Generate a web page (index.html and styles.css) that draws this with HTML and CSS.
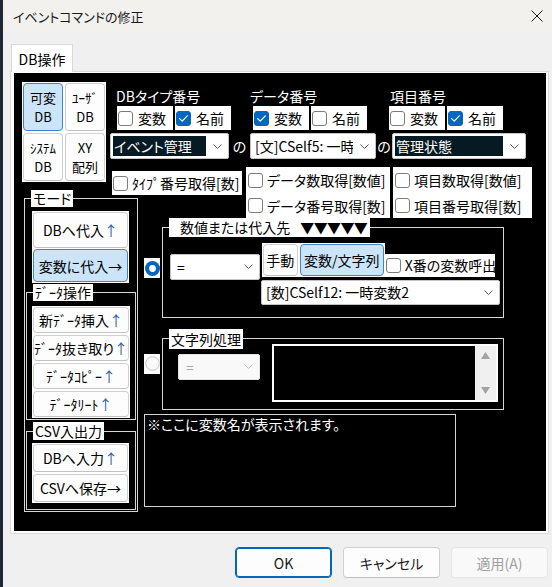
FILE: index.html
```html
<!DOCTYPE html>
<html lang="ja">
<head>
<meta charset="utf-8">
<title>イベントコマンドの修正</title>
<link rel="stylesheet" href="styles.css">
</head>
<body>
<div class="strip"></div>
<div class="win">
  <div class="titlebar">
    <span class="title">イベントコマンドの修正</span>
    <svg class="close" width="12" height="12" viewBox="0 0 12 12"><path d="M0.5 0.5L11.5 11.5M11.5 0.5L0.5 11.5" stroke="#1a1a1a" stroke-width="1" fill="none"/></svg>
  </div>
  <div class="tabs"><div class="tab">DB操作</div></div>
  <div class="panel">
    <div class="canvas">
      <div class="top">
        <div class="kinds">
          <div class="btn kbtn sel"><span>可変</span><span>DB</span></div>
          <div class="btn kbtn"><span>ﾕｰｻﾞ</span><span>DB</span></div>
          <div class="btn kbtn"><span>ｼｽﾃﾑ</span><span>DB</span></div>
          <div class="btn kbtn"><span>XY</span><span>配列</span></div>
        </div>
        <div class="fields">
          <div class="lbl l1">DBタイプ番号</div>
          <div class="lbl l3">データ番号</div>
          <div class="lbl l5">項目番号</div>

          <div class="cbpair p1">
            <span class="cbx"><span class="box"></span>変数</span>
            <span class="cbx"><span class="box on"><svg width="15" height="15" viewBox="0 0 15 15"><path d="M3.6 7.6L6.2 10.1L11.3 4.9" fill="none" stroke="#fff" stroke-width="1.3" stroke-linecap="round" stroke-linejoin="round"/></svg></span>名前</span>
          </div>
          <div class="cbpair p3">
            <span class="cbx"><span class="box on"><svg width="15" height="15" viewBox="0 0 15 15"><path d="M3.6 7.6L6.2 10.1L11.3 4.9" fill="none" stroke="#fff" stroke-width="1.3" stroke-linecap="round" stroke-linejoin="round"/></svg></span>変数</span>
            <span class="cbx"><span class="box"></span>名前</span>
          </div>
          <div class="cbpair p5">
            <span class="cbx"><span class="box"></span>変数</span>
            <span class="cbx"><span class="box on"><svg width="15" height="15" viewBox="0 0 15 15"><path d="M3.6 7.6L6.2 10.1L11.3 4.9" fill="none" stroke="#fff" stroke-width="1.3" stroke-linecap="round" stroke-linejoin="round"/></svg></span>名前</span>
          </div>

          <div class="combo cb1"><span class="val hl">イベント管理</span><span class="chev"><svg width="9" height="5" viewBox="0 0 9 5"><path d="M0.5 0.5L4.5 4.5L8.5 0.5" fill="none" stroke="#5a5a5a" stroke-width="1"/></svg></span></div>
          <div class="no n2">の</div>
          <div class="combo cb3"><span class="val">[文]CSelf5: 一時</span><span class="chev"><svg width="9" height="5" viewBox="0 0 9 5"><path d="M0.5 0.5L4.5 4.5L8.5 0.5" fill="none" stroke="#5a5a5a" stroke-width="1"/></svg></span></div>
          <div class="no n4">の</div>
          <div class="combo cb5"><span class="val hl">管理状態</span><span class="chev"><svg width="9" height="5" viewBox="0 0 9 5"><path d="M0.5 0.5L4.5 4.5L8.5 0.5" fill="none" stroke="#5a5a5a" stroke-width="1"/></svg></span></div>

          <div class="fb f1"><span class="box"></span>ﾀｲﾌﾟ番号取得[数]</div>
          <div class="fstack f3">
            <div class="fb fa"><span class="box"></span>データ数取得[数値]</div>
            <div class="fb fbb"><span class="box"></span>データ番号取得[数]</div>
          </div>
          <div class="fstack f5">
            <div class="fb fa"><span class="box"></span>項目数取得[数値]</div>
            <div class="fb fbb"><span class="box"></span>項目番号取得[数]</div>
          </div>
        </div>
      </div>

      <div class="bottom">
        <fieldset class="mode">
          <legend>モード</legend>
          <div class="wblock wmode">
            <div class="btn mbtn h36">DBへ代入<span class="up">↑</span></div>
            <div class="btn mbtn h33 sel">変数に代入→</div>
          </div>
          <fieldset class="sub data">
            <legend>ﾃﾞｰﾀ操作</legend>
            <div class="wblock wdata">
              <div class="btn mbtn h26">新ﾃﾞｰﾀ挿入<span class="up">↑</span></div>
              <div class="btn mbtn h26">ﾃﾞｰﾀ抜き取り<span class="up">↑</span></div>
              <div class="btn mbtn h26">ﾃﾞｰﾀｺﾋﾟｰ<span class="up">↑</span></div>
              <div class="btn mbtn h26">ﾃﾞｰﾀﾘｰﾄ<span class="up">↑</span></div>
            </div>
          </fieldset>
          <fieldset class="sub csv">
            <legend>CSV入出力</legend>
            <div class="wblock wcsv">
              <div class="btn mbtn h28">DBへ入力<span class="up">↑</span></div>
              <div class="btn mbtn h28">CSVへ保存→</div>
            </div>
          </fieldset>
        </fieldset>

        <div class="right">
          <div class="orow">
            <div class="rb rb1"><svg width="15" height="15" viewBox="0 0 15 15"><circle cx="7.5" cy="7.5" r="7.5" fill="#0067c0"/><circle cx="7.5" cy="7.5" r="3.4" fill="#fff"/></svg></div>
            <fieldset class="grp num">
              <legend>数値または代入先<span class="tri">▼▼▼▼▼</span></legend>
              <div class="numc">
                <div class="r1">
                  <div class="combo eq"><span class="val">=</span><span class="chev"><svg width="9" height="5" viewBox="0 0 9 5"><path d="M0.5 0.5L4.5 4.5L8.5 0.5" fill="none" stroke="#5a5a5a" stroke-width="1"/></svg></span></div>
                  <div class="bpair">
                    <div class="btn sbtn manual">手動</div>
                    <div class="btn sbtn vars sel">変数/文字列</div>
                  </div>
                  <div class="cbx xcall"><span class="box"></span>X番の変数呼出</div>
                </div>
                <div class="combo big"><span class="val">[数]CSelf12: 一時変数2</span><span class="chev"><svg width="9" height="5" viewBox="0 0 9 5"><path d="M0.5 0.5L4.5 4.5L8.5 0.5" fill="none" stroke="#5a5a5a" stroke-width="1"/></svg></span></div>
              </div>
            </fieldset>
          </div>

          <div class="orow row2">
            <div class="rb rb2"><svg width="15" height="15" viewBox="0 0 15 15"><circle cx="7.5" cy="7.5" r="6.8" fill="#fbfbfb" stroke="#c6c6c6" stroke-width="1"/></svg></div>
            <fieldset class="grp str">
              <legend>文字列処理</legend>
              <div class="strc">
                <div class="combo dis"><span class="val">=</span><span class="chev"><svg width="9" height="5" viewBox="0 0 9 5"><path d="M0.5 0.5L4.5 4.5L8.5 0.5" fill="none" stroke="#c0c0c0" stroke-width="1"/></svg></span></div>
                <div class="ta">
                  <div class="sb">
                    <svg width="9" height="7" viewBox="0 0 9 7"><path d="M4.5 0L9 7H0Z" fill="#a3a3a3"/></svg>
                    <svg width="9" height="7" viewBox="0 0 9 7"><path d="M0 0H9L4.5 7Z" fill="#a3a3a3"/></svg>
                  </div>
                </div>
              </div>
            </fieldset>
          </div>

          <div class="info">※ここに変数名が表示されます。</div>
        </div>
      </div>
    </div>
  </div>
  <div class="actions">
    <div class="abtn ok">OK</div>
    <div class="abtn">キャンセル</div>
    <div class="abtn disabled">適用(A)</div>
  </div>
</div>
</body>
</html>
```
FILE: styles.css
```css
* { box-sizing: border-box; }
html, body { margin: 0; padding: 0; }
body {
  width: 552px;
  height: 587px;
  overflow: hidden;
  display: flex;
  background: #f0f0f0;
  font-family: "Noto Sans CJK JP", "Noto Sans", sans-serif;
  font-size: 14px;
  font-feature-settings: "palt";
  color: #000;
}
.strip { width: 3px; flex: none; background: #1d2833; }
.win { width: 549px; flex: none; display: flex; flex-direction: column; background: #f0f0f0; }

.titlebar {
  height: 33px; flex: none; background: #f3f1ee;
  display: flex; align-items: center; justify-content: space-between;
  padding: 0 9px 0 10px;
}
.title { font-size: 13px; line-height: 16px; color: #1a1a1a; }
.close { margin-top: -2px; }

.tabs { display: flex; padding: 11px 0 0 8px; margin-bottom: -1px; position: relative; z-index: 1; }
.tab {
  width: 62px; height: 28px; background: #fff;
  border: 1px solid #d9d9d9; border-bottom: none;
  display: flex; align-items: center; justify-content: center;
  font-size: 14px; line-height: 16px;
}

.panel {
  margin-left: 7px; width: 539px; height: 463px;
  border: 1px solid #dadada; background: #fff;
  padding: 1px 2px 2px 3px;
}
.canvas { width: 532px; height: 458px; background: #000; display: flex; flex-direction: column; }

/* generic controls */
.btn {
  background: #fdfdfd; border: 1px solid #d0d0d0; border-bottom-color: #c2c2c2;
  border-radius: 4px; display: flex; align-items: center; justify-content: center;
  white-space: nowrap; color: #000;
}
.btn.sel { background: #cce4f7; border-color: #3d86cf; }
.up { color: #2c5f9f; }

.box {
  width: 15px; height: 15px; flex: none;
  border: 1px solid #7c7c7c; border-radius: 3px; background: #fff;
  display: flex; align-items: center; justify-content: center;
}
.box.on { background: #0067c0; border-color: #0067c0; }
.box.on svg { margin: -1px; }

.cbx {
  display: inline-flex; align-items: center; gap: 5px;
  height: 24px; padding: 0 7px 0 1px; background: #fff; white-space: nowrap;
  line-height: 16px;
}
.cbpair { display: flex; gap: 2px; }

.combo {
  display: flex; align-items: stretch; height: 26px;
  background: #fff; border: 1px solid #c4c4c4; border-radius: 2px;
  white-space: nowrap;
}
.combo .val { flex: 1; min-width: 0; overflow: hidden; display: flex; align-items: center; padding-left: 4px; line-height: 16px; }
.combo .val.hl { background: #061a24; color: #fff; margin: 2px 0 2px 2px; padding-left: 1px; }
.combo .chev { width: 22px; flex: none; display: flex; align-items: center; justify-content: center; }

/* top section */
.top { height: 117px; flex: none; display: flex; align-items: flex-start; }
.kinds {
  margin: 9px 0 0 8px; width: 84px; padding: 1px; background: #fff;
  display: grid; grid-template-columns: 40px 40px; grid-auto-rows: 48px; gap: 2px;
}
.kbtn { flex-direction: column; font-size: 13px; line-height: 19px; }
.kbtn span { display: block; height: 19px; }

.fields {
  margin: 15px 0 0 4px;
  display: grid;
  grid-template-columns: 119px 21px 126px 16px 140px;
  grid-template-rows: 18px 27px 34px 51px;
}
.fields > * { justify-self: start; align-self: start; }
.lbl { color: #fff; line-height: 16px; white-space: nowrap; width: max-content; }
.l1 { grid-area: 1 / 1; margin-left: 6px; }
.l3 { grid-area: 1 / 3; }
.l5 { grid-area: 1 / 5; margin-left: -2px; }
.cbpair { width: max-content; }
.p1 { grid-area: 2 / 1; margin-left: 7px; }
.p3 { grid-area: 2 / 3; margin-left: 3px; }
.p5 { grid-area: 2 / 5; margin-left: -3px; }
.cb1 { grid-area: 3 / 1; width: 119px; }
.cb3 { grid-area: 3 / 3; width: 126px; }
.cb5 { grid-area: 3 / 5; width: 134px; }
.cb1 .hl { margin-right: 0; }
.no { color: #fff; line-height: 16px; justify-self: center !important; align-self: start; margin-top: 5px; }
.n2 { grid-area: 3 / 2; }
.n4 { grid-area: 3 / 4; }

.fb {
  display: flex; align-items: center; gap: 4px; background: #fff;
  padding-left: 2px; white-space: nowrap; overflow: hidden; line-height: 16px;
}
.f1 { grid-area: 4 / 1; margin: 4px 0 0 2px; width: 130px; height: 24px; padding-left: 1px; }
.fstack { display: flex; flex-direction: column; }
.f3 { grid-area: 4 / 3; margin-left: -4px; width: 144px; }
.f5 { grid-area: 4 / 5; margin-left: 1px; width: 139px; }
.fa { height: 26px; }
.fbb { height: 25px; }

/* bottom section */
.bottom { flex: 1; display: flex; align-items: flex-start; }
fieldset { margin: 0; padding: 0; border: 1px solid #d6d6d6; min-inline-size: 0; }
legend {
  padding: 0 2px; margin-left: 6px; background: #fff; color: #000;
  line-height: 17px; font-size: 14px; white-space: nowrap;
}
.mode { margin-left: 10px; width: 114px; padding: 0 0 1px; }
.wblock { background: #fff; padding: 1px; display: flex; flex-direction: column; }
.wmode { margin: 4px 0 0 7px; width: 97px; gap: 1px; }
.mbtn { line-height: 16px; }
.h36 { height: 36px; }
.h33 { height: 33px; }
.h26 { height: 26px; }
.h28 { height: 28px; }
.sub { margin: 1px 1px 0; }
.data { margin-top: 1px; }
.wdata { margin: 5px 0 1px 5px; width: 98px; gap: 2px; }
.csv { margin-top: 2px; }
.csv legend { line-height: 18px; }
.wcsv { margin: 3px 0 6px 5px; width: 97px; gap: 2px; }

.right { margin: 28px 0 0 6px; display: flex; flex-direction: column; }
.orow { display: flex; align-items: flex-start; }
.row2 { margin-top: 11px; }
.rb { width: 16px; height: 20px; flex: none; background: #fff; display: flex; align-items: center; justify-content: center; }
.rb1 { margin-top: 40px; }
.rb2 { margin-top: 25px; background: #fdfdfd; }
.grp { margin-left: 2px; width: 342px; }
.num legend { padding: 0 3px 0 11px; line-height: 19px; }
.tri { margin-left: 10px; letter-spacing: -0.6px; }
.numc { padding: 6px 0 12px 7px; }
.r1 { display: flex; align-items: flex-start; height: 36.5px; }
.eq { width: 90px; margin-top: 10.5px; }
.eq .val { padding-left: 6px; }
.bpair { margin-left: 1.7px; background: #fff; padding: 1px; display: flex; gap: 2px; }
.sbtn { height: 32px; line-height: 16px; }
.manual { width: 35px; }
.vars { width: 84px; }
.xcall { margin-top: 10.5px; height: 23.5px; width: 110px; padding-left: 1px; gap: 4px; }
.big { margin-left: 91px; width: 239px; height: 25px; }

.str legend { line-height: 20px; }
.strc { display: flex; align-items: flex-start; padding-bottom: 7px; }
.dis { width: 82px; margin: 5px 0 0 15px; background: #f9f9f9; border-color: #e2e2e2; color: #a8a8a8; }
.dis .val { padding-left: 7px; }
.ta {
  width: 226px; height: 58px; margin: -5px 0 0 12px;
  border: 2px solid #fff; background: #000;
  display: flex; justify-content: flex-end;
}
.sb {
  width: 21px; background: #f0f0f0;
  display: flex; flex-direction: column; align-items: center; justify-content: space-between;
  padding: 6px 0 6px;
}

.info {
  margin-top: 4px; width: 312px; height: 93px;
  border: 1px solid #d4d4d4; color: #fff; padding: 1px 2px; line-height: 17px;
}

/* dialog buttons */
.actions { display: flex; justify-content: flex-end; gap: 11px; padding-right: 4px; margin-top: 13px; }
.abtn {
  width: 97px; height: 31px; border-radius: 4px;
  border: 1px solid #d0d0d0; border-bottom-color: #c0c0c0; background: #fdfdfd;
  display: flex; align-items: center; justify-content: center;
  font-size: 14px; line-height: 16px; color: #1a1a1a;
}
.abtn.ok { border-color: #0067c0; box-shadow: inset 0 0 0 1px #0067c0; }
.abtn.disabled { background: #f9f9f9; border-color: #e6e6e6; color: #a0a0a0; }
```
